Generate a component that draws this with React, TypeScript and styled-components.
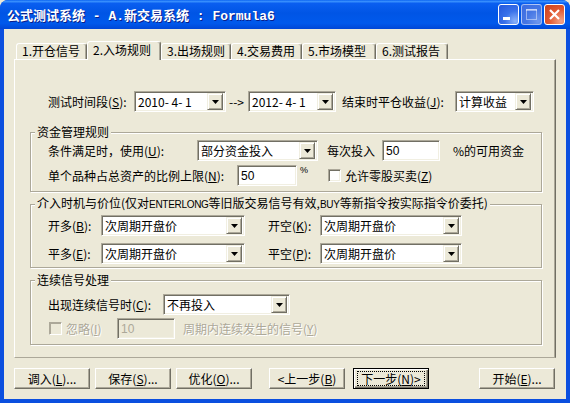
import React from 'react';
import styled, { createGlobalStyle, css } from 'styled-components';

const GlobalStyle = createGlobalStyle`
  html, body {
    margin: 0;
    padding: 0;
    background: #ECE9D8;
    overflow: hidden;
  }
  body {
    font-family: "Noto Sans CJK SC", "Liberation Sans", sans-serif;
    font-size: 12px;
    color: #000;
  }
`;

const Window = styled.div`
  width: 570px;
  height: 403px;
  display: flex;
  flex-direction: column;
  border-radius: 8px 8px 0 0;
  overflow: hidden;
  background: #0B4FDF;
`;

const TitleBar = styled.div`
  flex: none;
  height: 29px;
  display: flex;
  align-items: center;
  padding: 0 5px 0 7px;
  background: linear-gradient(180deg, #0058EE 0%, #3D95FF 4%, #0A5EF0 12%, #0055E5 45%, #0059EC 80%, #0046D6 100%);
`;

const TitleText = styled.div`
  flex: 1;
  color: #fff;
  font-family: "Liberation Mono", "Noto Sans CJK SC", monospace;
  font-size: 13px;
  font-weight: bold;
  white-space: pre;
  text-shadow: 1px 1px #0A1E8A;
`;

const CaptionButtons = styled.div`
  display: flex;
  gap: 2px;
`;

const CaptionButton = styled.div<{ $kind: 'min' | 'max' | 'close' }>`
  width: 21px;
  height: 21px;
  box-sizing: border-box;
  border: 1px solid #fff;
  border-radius: 3px;
  display: flex;
  ${p => p.$kind === 'min' && css`
    background: radial-gradient(circle at 85% 85%, #8AB2FA 0%, #3A72EA 45%, #2356DC 100%);
  `}
  ${p => p.$kind === 'max' && css`
    border-color: rgba(255, 255, 255, 0.5);
    background: radial-gradient(circle at 85% 85%, #6E97EE 0%, #4677E4 50%, #3A6AE0 100%);
  `}
  ${p => p.$kind === 'close' && css`
    background: radial-gradient(circle at 85% 85%, #F3A487 0%, #E25B34 50%, #C9401C 100%);
  `}
`;

const FrameBody = styled.div`
  flex: 1;
  display: flex;
  padding: 0 4px 4px;
  background: #0B4FDF;
`;

const Client = styled.div`
  flex: 1;
  display: flex;
  flex-direction: column;
  padding: 12px 10px 0;
  background: #ECE9D8;
`;

const TabStrip = styled.div`
  height: 18px;
  display: flex;
  align-items: flex-end;
  padding-left: 2px;
`;

const Tab = styled.div<{ $w: number; $active?: boolean }>`
  box-sizing: border-box;
  width: ${p => p.$w}px;
  height: 16px;
  padding-left: 5px;
  border: 1px solid;
  border-bottom: none;
  border-color: #fff #716F64 transparent #fff;
  border-radius: 3px 3px 0 0;
  box-shadow: inset -1px 0 #ACA899;
  background: #ECE9D8;
  line-height: 14px;
  white-space: nowrap;
  ${p => p.$active && css`
    position: relative;
    z-index: 1;
    height: 19px;
    margin-bottom: -1px;
    padding-top: 1px;
  `}
`;

const Panel = styled.div`
  box-sizing: border-box;
  height: 299px;
  display: flex;
  flex-direction: column;
  border: 1px solid;
  border-color: #fff #716F64 #ACA899 #fff;
  box-shadow: inset -1px 0 #ACA899;
`;

const Row = styled.div<{ $top?: number; $left?: number }>`
  height: 21px;
  display: flex;
  align-items: center;
  margin-top: ${p => p.$top ?? 0}px;
  padding-left: ${p => p.$left ?? 17}px;
`;

const Label = styled.span<{ $w?: number; $ml?: number; $disabled?: boolean }>`
  flex: none;
  white-space: nowrap;
  line-height: 14px;
  ${p => p.$w !== undefined && `width: ${p.$w}px;`}
  margin-left: ${p => p.$ml ?? 0}px;
  ${p => p.$disabled && css`
    color: #ACA899;
    text-shadow: 1px 1px #fff;
  `}
`;

const Small = styled.span`
  font-family: "Liberation Sans", sans-serif;
  font-size: 10px;
  letter-spacing: -0.3px;
`;

const Percent = styled.span`
  flex: none;
  align-self: flex-start;
  width: 28px;
  margin-left: 3px;
  font-family: "Liberation Sans", sans-serif;
  font-size: 9px;
  line-height: 10px;
`;

const sunken = css`
  box-sizing: border-box;
  height: 21px;
  border: 1px solid;
  border-color: #ACA899 #fff #fff #ACA899;
  box-shadow: inset 1px 1px #716F64, inset -1px -1px #F1EFE2;
`;

const ComboBox = styled.div<{ $w: number; $ml?: number }>`
  ${sunken};
  flex: none;
  width: ${p => p.$w}px;
  margin-left: ${p => p.$ml ?? 0}px;
  display: flex;
  align-items: center;
  padding: 2px;
  background: #fff;
`;

const ComboText = styled.span`
  flex: 1;
  min-width: 0;
  padding-left: 1px;
  line-height: 14px;
  white-space: pre;
`;

const DropButton = styled.div`
  flex: none;
  width: 16px;
  height: 17px;
  box-sizing: border-box;
  display: flex;
  align-items: center;
  justify-content: center;
  background: #ECE9D8;
  border: 1px solid;
  border-color: #F1EFE2 #716F64 #716F64 #F1EFE2;
  box-shadow: inset 1px 1px #fff, inset -1px -1px #ACA899;
`;

const Edit = styled.div<{ $w: number; $disabled?: boolean }>`
  ${sunken};
  flex: none;
  width: ${p => p.$w}px;
  padding: 3px 0 0 3px;
  line-height: 14px;
  font-family: "Liberation Sans", sans-serif;
  background: ${p => (p.$disabled ? '#ECE9D8' : '#fff')};
  color: ${p => (p.$disabled ? '#ACA899' : '#000')};
`;

const CheckBox = styled.span<{ $ml?: number; $disabled?: boolean }>`
  flex: none;
  width: 13px;
  height: 13px;
  box-sizing: border-box;
  margin-left: ${p => p.$ml ?? 0}px;
  border: 1px solid;
  border-color: #ACA899 #fff #fff #ACA899;
  box-shadow: inset 1px 1px #716F64, inset -1px -1px #F1EFE2;
  background: ${p => (p.$disabled ? '#ECE9D8' : '#fff')};
  ${p => p.$disabled && css`
    box-shadow: inset 1px 1px #ACA899;
  `}
`;

const Group = styled.fieldset<{ $top: number; $bottom: number }>`
  box-sizing: border-box;
  width: 512px;
  margin: ${p => p.$top}px 0 0 15px;
  padding: 0 0 ${p => p.$bottom}px 0;
  border: 1px solid #ACA899;
  box-shadow: 1px 1px 0 #fff, inset 1px 1px 0 #fff;
  min-inline-size: 0;

  legend {
    margin-left: 4px;
    padding: 0 2px;
    line-height: 14px;
    background: #ECE9D8;
    white-space: nowrap;
  }
`;

const ButtonBar = styled.div`
  display: flex;
  margin-top: 10px;
`;

const Button = styled.div<{ $ml?: number; $default?: boolean }>`
  box-sizing: border-box;
  width: 76px;
  height: 21px;
  margin-left: ${p => p.$ml ?? 0}px;
  display: flex;
  align-items: center;
  justify-content: center;
  background: #ECE9D8;
  border: 1px solid;
  border-color: #fff #716F64 #716F64 #fff;
  box-shadow: inset -1px -1px #ACA899;
  line-height: 14px;
  white-space: nowrap;
  ${p => p.$default && css`
    border: 1px solid #000;
    box-shadow: inset 1px 1px #fff, inset -1px -1px #716F64, inset -2px -2px #ACA899;
  `}
`;

const FocusRing = styled.span`
  display: flex;
  align-items: center;
  justify-content: center;
  width: 66px;
  height: 13px;
  outline: 1px dotted #000;
`;

const Arrow = () => (
  <svg width="7" height="4" viewBox="0 0 7 4">
    <polygon points="0,0 7,0 3.5,4" fill="#000" />
  </svg>
);

const Combo: React.FC<{ w: number; ml?: number; value: string }> = ({ w, ml, value }) => (
  <ComboBox $w={w} $ml={ml}>
    <ComboText>{value}</ComboText>
    <DropButton>
      <Arrow />
    </DropButton>
  </ComboBox>
);

const Key: React.FC<{ k: string }> = ({ k }) => (
  <>
    (<u>{k}</u>)
  </>
);

const App: React.FC = () => {
  return (
    <Window>
      <GlobalStyle />
      <TitleBar>
        <TitleText>公式测试系统 - A.新交易系统 : Formula6</TitleText>
        <CaptionButtons>
          <CaptionButton $kind="min">
            <svg width="19" height="19" viewBox="0 0 19 19">
              <rect x="4" y="12" width="7" height="3" fill="#fff" />
            </svg>
          </CaptionButton>
          <CaptionButton $kind="max">
            <svg width="19" height="19" viewBox="0 0 19 19">
              <rect x="4.5" y="4.5" width="10" height="10" fill="none" stroke="rgba(255,255,255,0.45)" />
              <rect x="4" y="4" width="11" height="2" fill="rgba(255,255,255,0.45)" />
            </svg>
          </CaptionButton>
          <CaptionButton $kind="close">
            <svg width="19" height="19" viewBox="0 0 19 19">
              <path d="M5 5 L14 14 M14 5 L5 14" stroke="#fff" strokeWidth="2.2" />
            </svg>
          </CaptionButton>
        </CaptionButtons>
      </TitleBar>

      <FrameBody>
        <Client>
          <TabStrip>
            <Tab $w={71}>1.开仓信号</Tab>
            <Tab $w={74} $active>2.入场规则</Tab>
            <Tab $w={70}>3.出场规则</Tab>
            <Tab $w={71}>4.交易费用</Tab>
            <Tab $w={74}>5.市场模型</Tab>
            <Tab $w={72}>6.测试报告</Tab>
          </TabStrip>

          <Panel>
            <Row $top={31} $left={33}>
              <Label $w={86}>测试时间段<Key k="S" />:</Label>
              <Combo w={92} value="2010- 4- 1" />
              <Label $w={19} $ml={3}>--&gt;</Label>
              <Combo w={88} value="2012- 4- 1" />
              <Label $w={113} $ml={6}>结束时平仓收益<Key k="J" />:</Label>
              <Combo w={79} value="计算收益" />
            </Row>

            <Group $top={13} $bottom={5}>
              <legend>资金管理规则</legend>
              <Row $top={1}>
                <Label $w={149}>条件满足时，使用<Key k="U" />:</Label>
                <Combo w={121} value="部分资金投入" />
                <Label $w={55} $ml={9}>每次投入</Label>
                <Edit $w={58}>50</Edit>
                <Label $ml={13}>%的可用资金</Label>
              </Row>
              <Row $top={4}>
                <Label $w={189}>单个品种占总资产的比例上限<Key k="N" />:</Label>
                <Edit $w={60}>50</Edit>
                <Percent>%</Percent>
                <CheckBox />
                <Label $ml={4}>允许零股买卖<Key k="Z" /></Label>
              </Row>
            </Group>

            <Group $top={4} $bottom={3}>
              <legend>
                介入时机与价位(仅对<Small>ENTERLONG</Small>等旧版交易信号有效,<Small>BUY</Small>等新指令按实际指令价委托)
              </legend>
              <Row $top={3}>
                <Label $w={53}>开多<Key k="B" />:</Label>
                <Combo w={144} value="次周期开盘价" />
                <Label $w={52} $ml={23}>开空<Key k="K" />:</Label>
                <Combo w={142} value="次周期开盘价" />
              </Row>
              <Row $top={7}>
                <Label $w={53}>平多<Key k="E" />:</Label>
                <Combo w={144} value="次周期开盘价" />
                <Label $w={52} $ml={23}>平空<Key k="P" />:</Label>
                <Combo w={142} value="次周期开盘价" />
              </Row>
            </Group>

            <Group $top={5} $bottom={5}>
              <legend>连续信号处理</legend>
              <Row $top={7}>
                <Label $w={115}>出现连续信号时<Key k="C" />:</Label>
                <Combo w={127} value="不再投入" />
              </Row>
              <Row $top={3}>
                <CheckBox $ml={1} $disabled />
                <Label $w={51} $ml={4} $disabled>忽略<Key k="I" /></Label>
                <Edit $w={58} $disabled>10</Edit>
                <Label $ml={8} $disabled>周期内连续发生的信号<Key k="Y" /></Label>
              </Row>
            </Group>
          </Panel>

          <ButtonBar>
            <Button>调入<Key k="L" />...</Button>
            <Button $ml={5}>保存<Key k="S" />...</Button>
            <Button $ml={5}>优化<Key k="O" />...</Button>
            <Button $ml={17}>&lt;上一步<Key k="B" /></Button>
            <Button $ml={8} $default>
              <FocusRing>下一步<Key k="N" />&gt;</FocusRing>
            </Button>
            <Button $ml={50}>开始<Key k="E" />...</Button>
          </ButtonBar>
        </Client>
      </FrameBody>
    </Window>
  );
};

export default App;
